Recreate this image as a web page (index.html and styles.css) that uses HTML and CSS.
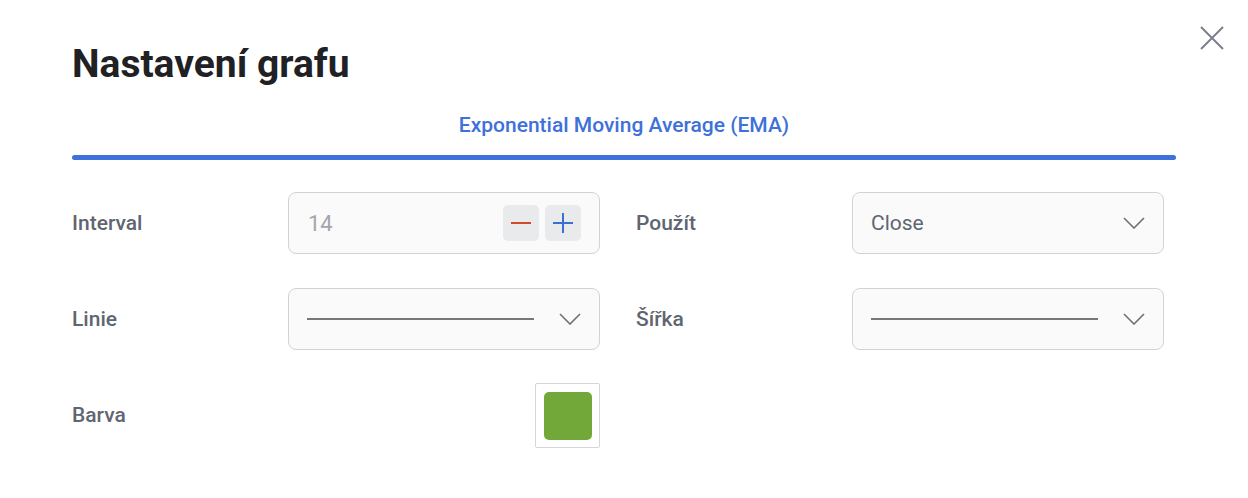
FILE: index.html
```html
<!DOCTYPE html>
<html lang="cs">
<head>
<meta charset="utf-8">
<title>Nastavení grafu</title>
<link rel="stylesheet" href="styles.css">
</head>
<body>
<div class="dialog">
  <button class="close" aria-label="Zavřít">
    <svg width="24" height="24" viewBox="0 0 24 24"><path d="M1 1L23 23M23 1L1 23" stroke="#7b808a" stroke-width="2" fill="none"/></svg>
  </button>
  <h1 class="title">Nastavení grafu</h1>
  <div class="tabs">
    <div class="tab">Exponential Moving Average (EMA)</div>
    <div class="tab-bar"></div>
  </div>
  <div class="form">
    <div class="label">Interval</div>
    <div class="field stepper">
      <span class="value muted">14</span>
      <div class="btns">
        <button class="step"><svg width="20" height="20" viewBox="0 0 20 20"><path d="M0 10H20" stroke="#d04a2b" stroke-width="2"/></svg></button>
        <button class="step"><svg width="20" height="20" viewBox="0 0 20 20"><path d="M0 10H20M10 0V20" stroke="#3c6fd2" stroke-width="2"/></svg></button>
      </div>
    </div>
    <div class="spacer"></div>
    <div class="label">Použít</div>
    <div class="field select">
      <span class="value">Close</span>
      <svg class="chev" width="22" height="12" viewBox="0 0 22 12"><path d="M1 1L11 11L21 1" stroke="#6b7079" stroke-width="1.6" fill="none"/></svg>
    </div>

    <div class="label">Linie</div>
    <div class="field select">
      <span class="line"></span>
      <svg class="chev" width="22" height="12" viewBox="0 0 22 12"><path d="M1 1L11 11L21 1" stroke="#6b7079" stroke-width="1.6" fill="none"/></svg>
    </div>
    <div class="spacer"></div>
    <div class="label">Šířka</div>
    <div class="field select">
      <span class="line"></span>
      <svg class="chev" width="22" height="12" viewBox="0 0 22 12"><path d="M1 1L11 11L21 1" stroke="#6b7079" stroke-width="1.6" fill="none"/></svg>
    </div>

    <div class="label">Barva</div>
    <div class="swatch-cell">
      <div class="swatch"><div class="swatch-fill"></div></div>
    </div>
  </div>
</div>
</body>
</html>
```

FILE: styles.css
```css
* { box-sizing: border-box; }
html, body {
  margin: 0;
  padding: 0;
  background: #ffffff;
  font-family: Roboto, "Liberation Sans", Arial, sans-serif;
}
.dialog {
  position: relative;
  width: 1248px;
  height: 498px;
  padding: 39px 72px 0 72px;
}
.close {
  position: absolute;
  top: 26px;
  left: 1200px;
  width: 24px;
  height: 24px;
  padding: 0;
  border: 0;
  background: none;
  display: block;
}
.close svg { display: block; }
.title {
  margin: 0;
  font-size: 39px;
  line-height: 50px;
  font-weight: 700;
  color: #1f2125;
}
.tabs {
  width: 1104px;
  margin-top: 23px;
}
.tab {
  text-align: center;
  font-size: 21px;
  line-height: 26px;
  font-weight: 500;
  color: #3e71d9;
  padding-bottom: 17px;
}
.tab-bar {
  height: 5px;
  border-radius: 3px;
  background: #3e71d9;
}
.form {
  margin-top: 32px;
  display: grid;
  grid-template-columns: 216px 312px 36px 216px 312px;
  grid-auto-rows: 62px;
  row-gap: 34px;
  align-items: center;
}
.label {
  font-size: 21px;
  font-weight: 500;
  color: #5f6571;
}
.field {
  height: 62px;
  border: 1px solid #d1d3d8;
  border-radius: 8px;
  background: #fafafa;
  display: flex;
  align-items: center;
}
.stepper {
  padding: 0 18px 0 19px;
  justify-content: space-between;
}
.value {
  font-size: 21px;
  color: #5f6571;
}
.value.muted { color: #a2a5ab; font-size: 22px; }
.btns { display: flex; gap: 6px; }
.step {
  width: 36px;
  height: 36px;
  border: 0;
  border-radius: 5px;
  background: #e9eaec;
  padding: 0;
  display: flex;
  align-items: center;
  justify-content: center;
}
.step svg { display: block; }
.select {
  padding: 0 18px 0 18px;
  justify-content: space-between;
}
.line {
  display: block;
  width: 227px;
  height: 2px;
  background: #76777b;
}
.chev { display: block; }
.swatch-cell {
  height: 64px;
  display: flex;
  justify-content: flex-end;
}
.swatch {
  width: 65px;
  height: 65px;
  border: 1px solid #d4d6da;
  border-radius: 2px;
  background: #fff;
  display: flex;
  align-items: center;
  justify-content: center;
}
.swatch-fill {
  width: 48px;
  height: 48px;
  border-radius: 5px;
  background: #72a73a;
}
```
